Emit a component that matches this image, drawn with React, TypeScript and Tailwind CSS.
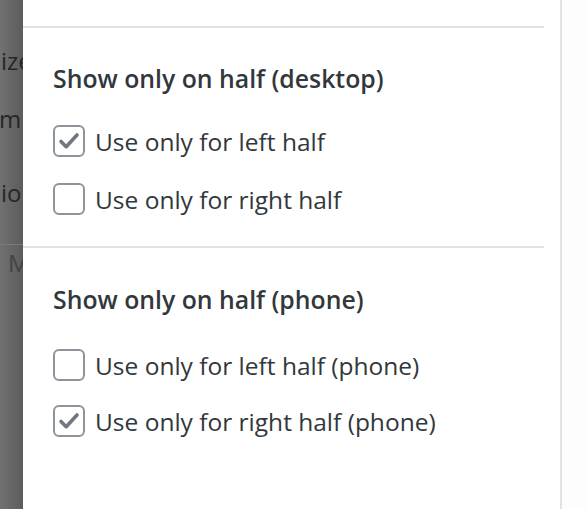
import React from 'react';

const sections = [
    {
        title: "Show only on half (desktop)",
        options: [
            { label: "Use only for left half", checked: true },
            { label: "Use only for right half", checked: false },
        ],
    },
    {
        title: "Show only on half (phone)",
        options: [
            { label: "Use only for left half (phone)", checked: false },
            { label: "Use only for right half (phone)", checked: true },
        ],
    },
];

const Checkbox = ({ checked }: { checked: boolean }) => (
    <span className="w-[32px] h-[32px] shrink-0 rounded-[6px] border-2 border-[#8d949b] bg-white flex items-center justify-center">
        {checked && (
            <svg viewBox="0 0 24 24" className="w-[24px] h-[24px]">
                <path d="M4 12.5l5.2 5.2L20 6" fill="none" stroke="#6f7780" strokeWidth="3.6" strokeLinecap="round" strokeLinejoin="round" />
            </svg>
        )}
    </span>
);

const App: React.FC = () => {
    return (
        <div className="w-[587px] h-[509px] flex overflow-hidden bg-[#fdfdfd] text-[#32373c]" style={{ fontFamily: '"Open Sans", "Noto Sans", sans-serif' }}>
            {/* dimmed page behind the panel */}
            <div className="w-[23px] shrink-0 overflow-hidden bg-gradient-to-r from-[#717171] to-[#5c5c5c] text-[24px] text-[#262626] whitespace-nowrap">
                <div className="h-[43px]"></div>
                <div className="h-[36px] leading-[36px] pl-[1px]">ize</div>
                <div className="h-[22px]"></div>
                <div className="h-[36px] leading-[36px] -ml-[1px]">m</div>
                <div className="h-[38px]"></div>
                <div className="h-[36px] leading-[36px] pl-[1px]">io</div>
                <div className="h-[33px]"></div>
                <div className="h-[1px] bg-[#7a7a7a]"></div>
                <div className="h-[36px] leading-[36px] pl-[8px] text-[#444]">M</div>
            </div>

            {/* panel */}
            <div className="w-[539px] shrink-0 bg-white border-r-2 border-[#e2e2e2] pr-[16px]">
                <div className="h-[26px]"></div>
                {sections.map((section, i) => (
                    <div key={i} className={`border-t-2 border-[#e2e2e2] pl-[30px] ${i === 0 ? 'pt-[35px] pb-[31px]' : 'pt-[36px]'}`}>
                        <h3 className="text-[24.8px] leading-[30px] font-semibold">{section.title}</h3>
                        <div className={`${i === 0 ? 'mt-[32px] gap-[26px]' : 'mt-[35px] gap-[24px]'} flex flex-col`}>
                            {section.options.map((opt, j) => (
                                <label key={j} className="flex items-center gap-[10px] h-[32px]">
                                    <Checkbox checked={opt.checked} />
                                    <span className="text-[24.5px] leading-[32px] pt-[2px]">{opt.label}</span>
                                </label>
                            ))}
                        </div>
                    </div>
                ))}
            </div>
        </div>
    );
};

export default App;
